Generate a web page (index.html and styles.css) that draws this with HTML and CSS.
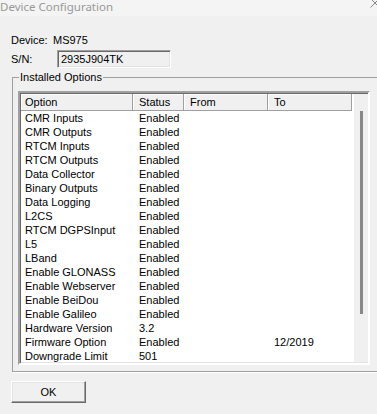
FILE: index.html
```html
<!DOCTYPE html>
<html>
<head>
	<title>Device Configuration</title>
	<meta charset="utf-8">
	<link rel="stylesheet" href="styles.css">
</head>
<body>
	<div class="titlebar">
		<span class="title">Device Configuration</span>
		<svg class="close" width="10" height="10" viewBox="0 0 10 10">
			<path d="M0.5 0.5 L9.5 9.5 M9.5 0.5 L0.5 9.5" stroke="#8a8a8a" stroke-width="1" fill="none"/>
		</svg>
	</div>

	<div class="info">
		<div class="row">
			<span class="label dev">Device:</span>
			<span>MS975</span>
		</div>
		<div class="row sn">
			<span class="label">S/N:</span>
			<div class="textbox">2935J904TK</div>
		</div>
	</div>

	<fieldset class="group">
		<legend>Installed Options</legend>
		<div class="listbox">
			<div class="grid" id="grid">
				<div class="head first">Option</div>
				<div class="head">Status</div>
				<div class="head">From</div>
				<div class="head">To</div>
			</div>
			<div class="scroll"><div class="thumb"></div></div>
		</div>
	</fieldset>

	<button class="ok">OK</button>

<script>
var options = [
	["CMR Inputs", "Enabled", "", ""],
	["CMR Outputs", "Enabled", "", ""],
	["RTCM Inputs", "Enabled", "", ""],
	["RTCM Outputs", "Enabled", "", ""],
	["Data Collector", "Enabled", "", ""],
	["Binary Outputs", "Enabled", "", ""],
	["Data Logging", "Enabled", "", ""],
	["L2CS", "Enabled", "", ""],
	["RTCM DGPSInput", "Enabled", "", ""],
	["L5", "Enabled", "", ""],
	["LBand", "Enabled", "", ""],
	["Enable GLONASS", "Enabled", "", ""],
	["Enable Webserver", "Enabled", "", ""],
	["Enable BeiDou", "Enabled", "", ""],
	["Enable Galileo", "Enabled", "", ""],
	["Hardware Version", "3.2", "", ""],
	["Firmware Option", "Enabled", "", "12/2019"],
	["Downgrade Limit", "501", "", ""]
];
var grid = document.getElementById('grid');
for (var i = 0; i < options.length; i++) {
	for (var j = 0; j < 4; j++) {
		var cell = document.createElement('div');
		cell.className = j == 0 ? 'cell first' : 'cell';
		cell.textContent = options[i][j];
		grid.appendChild(cell);
	}
}
</script>
</body>
</html>
```

FILE: styles.css
```css
html, body{
	margin: 0;
	overflow: hidden;
}
body{
	width: 377px;
	height: 414px;
	background: #f0f0f0;
	font-family: "Liberation Sans", Arial, sans-serif;
	font-size: 11px;
	line-height: 14px;
	color: #000;
}
.titlebar{
	height: 16px;
	background: #f4f4f4;
	display: flex;
	justify-content: space-between;
	align-items: flex-start;
	overflow: hidden;
}
.title{
	font-family: "Noto Sans", sans-serif;
	font-size: 11.5px;
	line-height: 14px;
	color: #999;
}
.close{
	margin-right: -3px;
	margin-top: -2px;
}
.info{
	padding-left: 11px;
	padding-top: 17px;
}
.row{
	display: flex;
	align-items: center;
}
.label{
	width: 46px;
}
.label.dev{
	width: 42px;
}
.sn{
	margin-top: 3px;
}
.textbox{
	width: 109px;
	height: 16px;
	line-height: 16px;
	border: 1px solid;
	border-color: #a0a0a0 #fff #fff #a0a0a0;
	box-shadow: inset 1px 1px 0 #696969, inset -1px -1px 0 #e3e3e3;
	padding-left: 3px;
}
.group{
	margin: 2px -30px 0 12px;
	padding: 0 0 6px 5px;
	border: 1px solid #a0a0a0;
	box-shadow: 1px 1px 0 #fff;
	min-width: 0;
}
.group legend{
	margin-left: 1px;
	padding: 0 1px;
	line-height: 14px;
}
.listbox{
	margin-top: 7px;
	width: 348px;
	height: 270px;
	border: 2px solid;
	border-color: #a0a0a0 #fff #fff #a0a0a0;
	box-shadow: inset 1px 1px 0 #696969, inset -1px -1px 0 #e3e3e3;
	display: flex;
	background: #fff;
}
.grid{
	margin: 1px 0 0 1px;
	width: 332px;
	display: grid;
	grid-template-columns: 112px 51px 84px 84px;
	grid-template-rows: 17px;
	grid-auto-rows: 14px;
	align-content: start;
}
.head{
	background: #f0f0f0;
	border-right: 1px solid #a0a0a0;
	border-bottom: 1px solid #a0a0a0;
	box-shadow: inset 1px 1px 0 #fff;
	padding-left: 6px;
	line-height: 16px;
}
.cell{
	padding-left: 6px;
	white-space: nowrap;
}
.first{
	padding-left: 4px;
}
.scroll{
	margin-top: 1px;
	width: 14px;
	height: 268px;
	background: #f0f0f0;
	margin-left: 1px;
	display: flex;
	justify-content: center;
}
.thumb{
	margin-top: 17px;
	width: 3px;
	height: 203px;
	background: #888;
}
.ok{
	display: block;
	margin: 9px 0 0 11px;
	width: 75px;
	height: 22px;
	padding: 0;
	font-family: "Liberation Sans", Arial, sans-serif;
	font-size: 11px;
	color: #000;
	background: #f0f0f0;
	border: 1px solid;
	border-color: #fff #696969 #696969 #fff;
	box-shadow: inset -1px -1px 0 #a0a0a0, inset 1px 1px 0 #e3e3e3;
}
```
